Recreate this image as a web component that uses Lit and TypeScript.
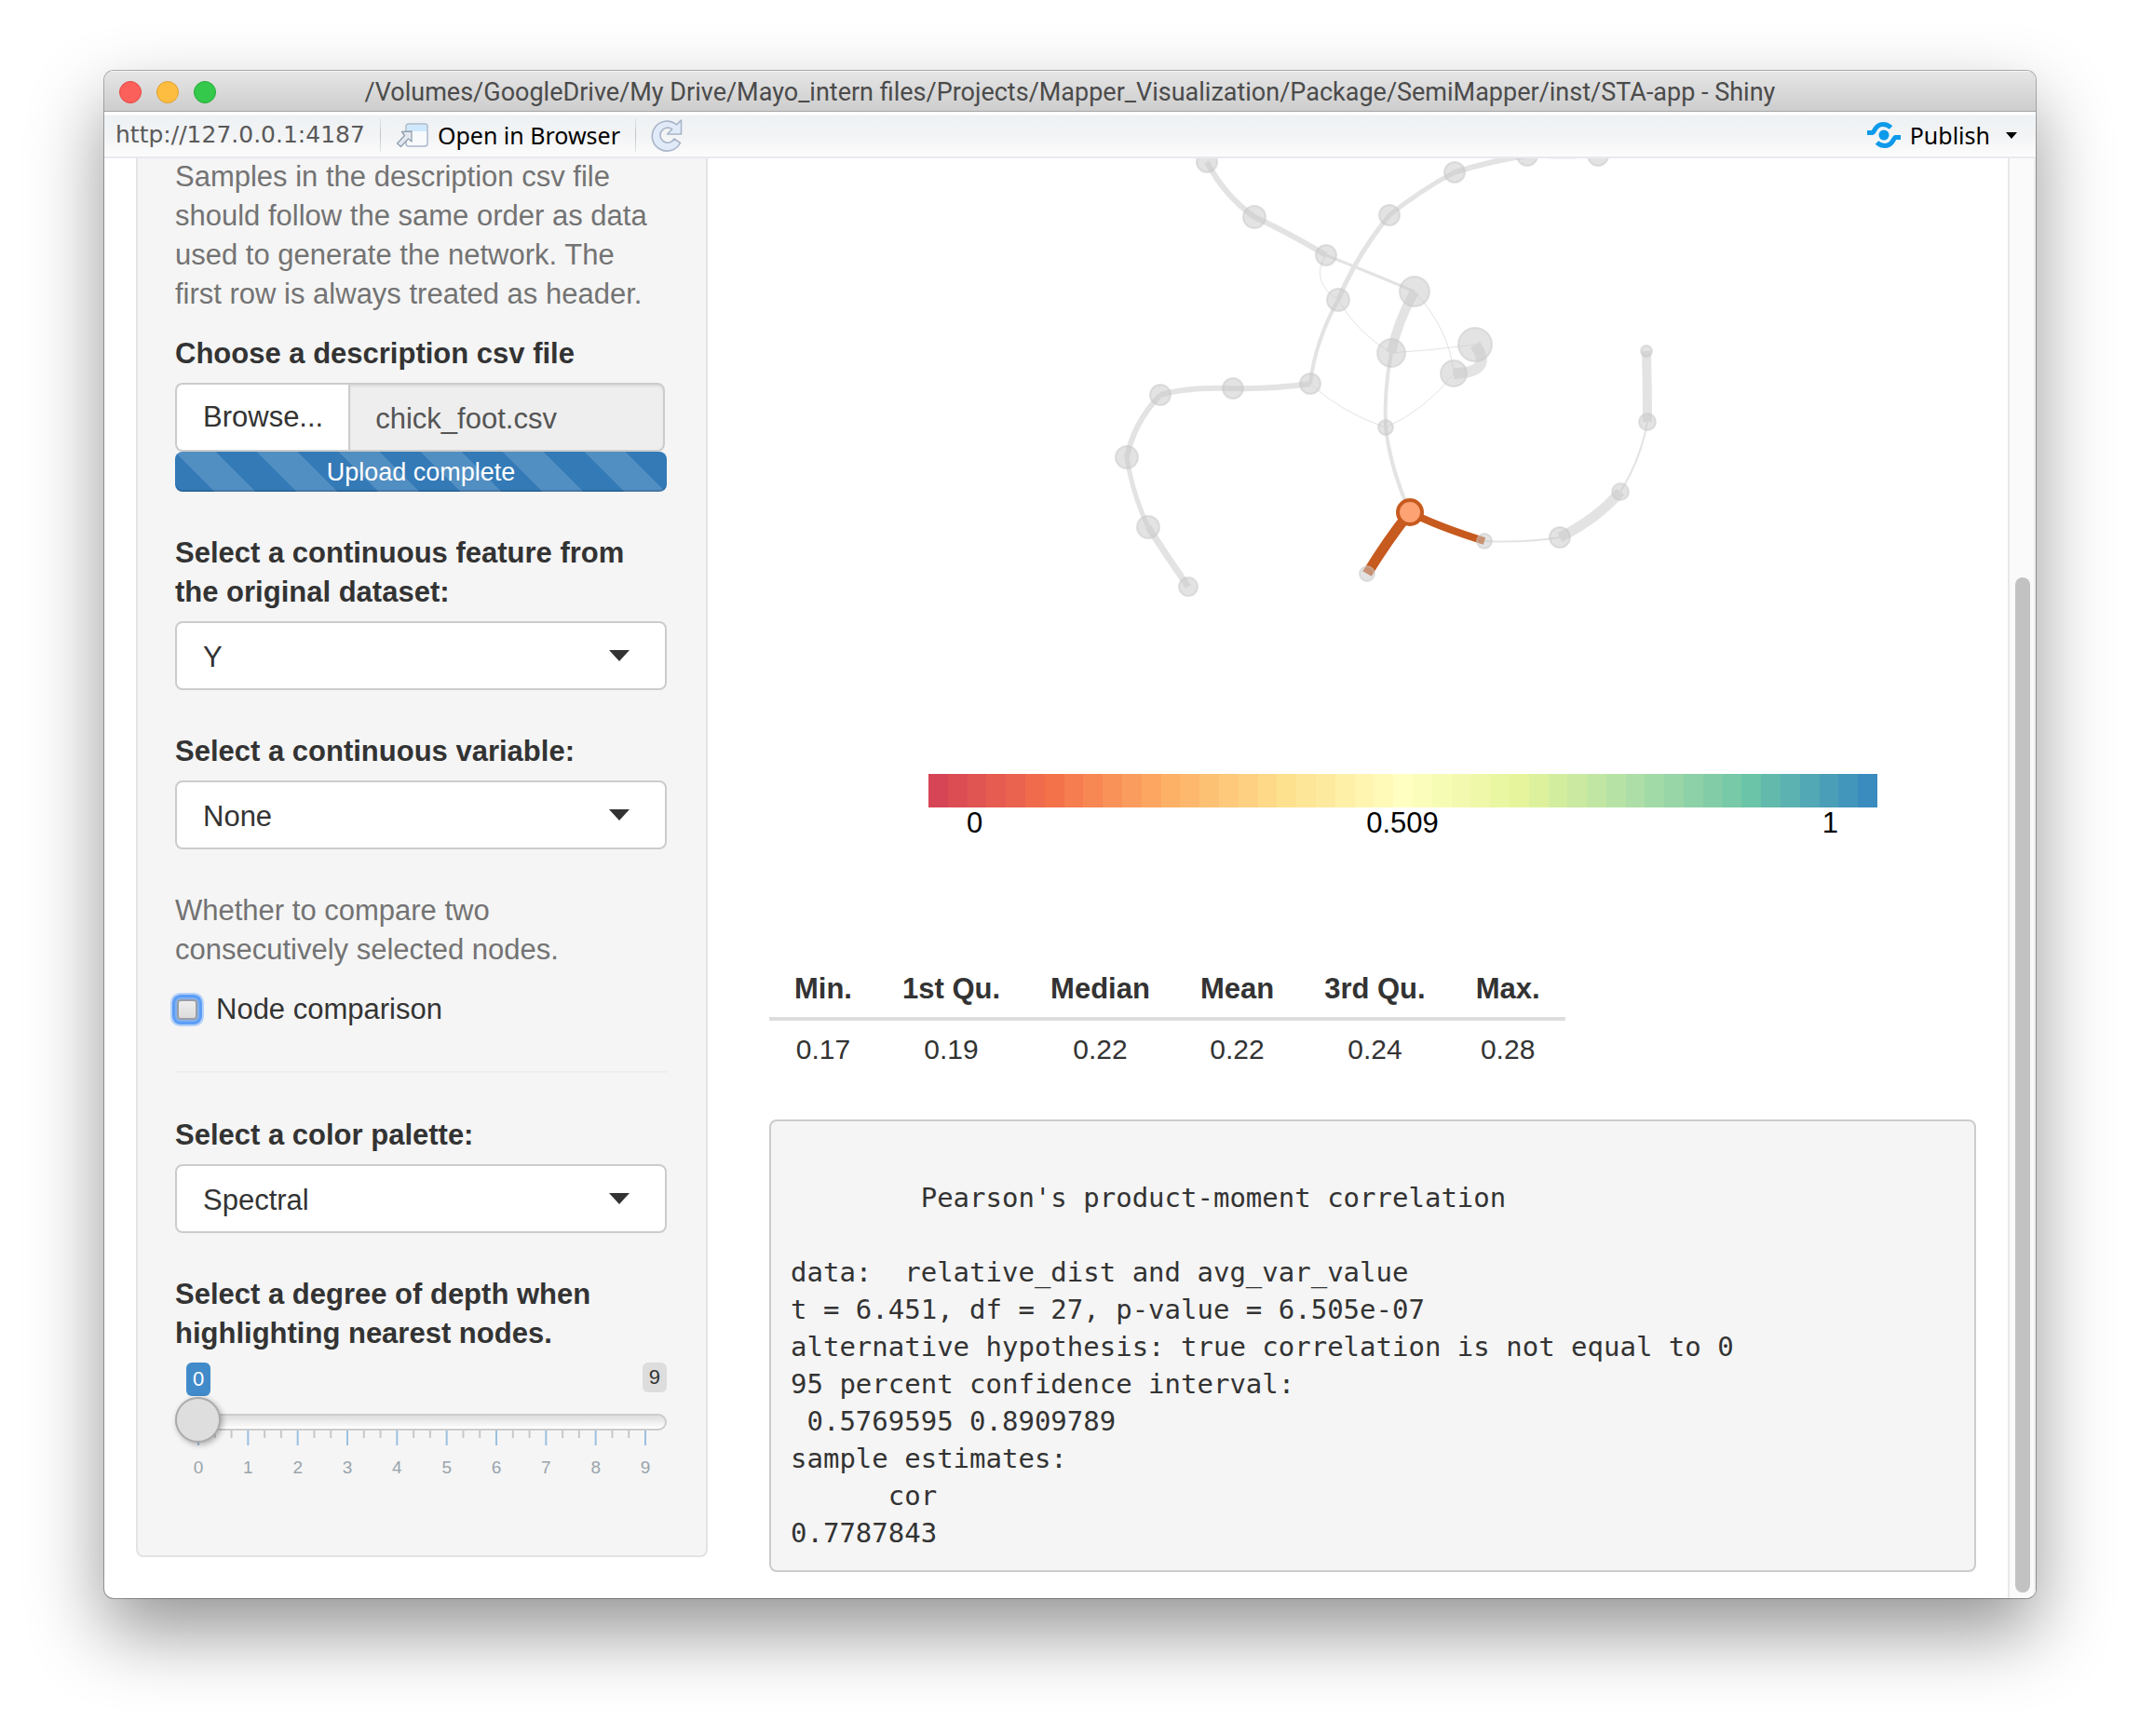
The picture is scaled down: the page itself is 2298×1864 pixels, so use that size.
import { LitElement, html, svg, css } from "lit";
import { customElement, property } from "lit/decorators.js";

type Node = [x: number, y: number, r: number];
type Edge = [from: string, to: string, cx: number, cy: number, width: number];

const NODES: Record<string, Node> = {
  a: [1296, 174, 11], b: [1347, 233, 12], c: [1424, 274, 11], d: [1492, 231, 11],
  e: [1562, 185, 11], f: [1640, 167, 11], g: [1716, 167, 11], h: [1437, 322, 12],
  i: [1519, 313, 16], j: [1494, 379, 15], k: [1584, 370, 18], l: [1561, 401, 14],
  m: [1407, 412, 11], n: [1324, 417, 11], o: [1246, 424, 11], p: [1210, 491, 12],
  q: [1233, 566, 12], r: [1276, 630, 10], s: [1488, 459, 8], u: [1468, 616, 8],
  v: [1594, 581, 8], w: [1675, 577, 11], x: [1740, 528, 9], y: [1769, 453, 9],
  z: [1768, 377, 6],
};
const SELECTED: Node = [1514, 550, 13];

const EDGES: Edge[] = [
  ["a", "b", 1315, 210, 6], ["b", "c", 1380, 248, 6], ["c", "i", 1474, 294, 3],
  ["c", "h", 1406, 302, 1], ["d", "e", 1527, 203, 5], ["e", "f", 1604, 172, 6],
  ["f", "g", 1680, 171, 3], ["d", "h", 1456, 275, 5], ["h", "m", 1412, 367, 4],
  ["h", "j", 1457, 357, 1], ["i", "j", 1500, 347, 10], ["i", "l", 1557, 355, 1],
  ["j", "k", 1539, 376, 1], ["k", "l", 1605, 400, 12], ["j", "s", 1486, 420, 4],
  ["m", "n", 1364, 418, 6], ["n", "o", 1278, 415, 6], ["o", "p", 1218, 453, 6],
  ["p", "q", 1216, 530, 5], ["q", "r", 1253, 597, 7], ["m", "s", 1441, 443, 1],
  ["l", "s", 1531, 440, 1], ["v", "w", 1637, 583, 2], ["w", "x", 1715, 557, 11],
  ["x", "y", 1762, 493, 2], ["y", "z", 1769, 415, 10],
];

const SPECTRAL = [
  [213, 62, 79], [244, 109, 67], [253, 174, 97], [254, 224, 139], [255, 255, 191],
  [230, 245, 152], [171, 221, 164], [102, 194, 165], [50, 136, 189],
];
const SWATCHES = Array.from({ length: 49 }, (_, i) => {
  const k = Math.min(Math.floor(i / 6), 7);
  const t = i / 6 - k;
  const mix = SPECTRAL[k].map((v, c) => Math.round(v + (SPECTRAL[k + 1][c] - v) * t));
  return `rgb(${mix.join(",")})`;
});

const SUMMARY = [
  ["Min.", "0.17"], ["1st Qu.", "0.19"], ["Median", "0.22"],
  ["Mean", "0.22"], ["3rd Qu.", "0.24"], ["Max.", "0.28"],
];

const REPORT = [
  " ",
  "        Pearson's product-moment correlation",
  "",
  "data:  relative_dist and avg_var_value",
  "t = 6.451, df = 27, p-value = 6.505e-07",
  "alternative hypothesis: true correlation is not equal to 0",
  "95 percent confidence interval:",
  " 0.5769595 0.8909789",
  "sample estimates:",
  "      cor",
  "0.7787843",
].join("\n");

@customElement("select-field")
class SelectField extends LitElement {
  @property() label = "";
  @property() value = "";

  static styles = css`
    :host { display: block; }
    label { display: block; margin-bottom: 10px; font-weight: bold; }
    .box { display: grid; align-items: center; }
    .box > * { grid-area: 1 / 1; }
    select {
      appearance: none; box-sizing: border-box; width: 100%; height: 74px;
      padding: 4px 80px 0 28px; border: 2px solid #ccc; border-radius: 8px;
      background: #fff; color: #333; font: inherit;
    }
    svg { justify-self: end; margin-right: 40px; pointer-events: none; }
  `;

  render() {
    return html`
      <label for="field">${this.label}</label>
      <div class="box">
        <select id="field"><option>${this.value}</option></select>
        <svg width="22" height="12" viewBox="0 0 22 12" aria-hidden="true"><path d="M0 0H22L11 12Z" fill="#333" /></svg>
      </div>
    `;
  }
}

@customElement("depth-slider")
class DepthSlider extends LitElement {
  static styles = css`
    :host { display: block; }
    label { display: block; margin-bottom: 10px; font-weight: bold; }
    .badges { display: flex; justify-content: space-between; align-items: start; padding-left: 12px; margin-bottom: 3px; }
    .badge { padding: 0 7px; border-radius: 6px; background: #ddd; font-size: 22px; line-height: 32px; }
    .badge.current { background: #428bca; color: #fff; line-height: 36px; }
    input {
      appearance: none; display: block; position: relative; box-sizing: border-box;
      width: 100%; height: 50px; margin: 0; background: none;
    }
    input::-webkit-slider-runnable-track {
      box-sizing: border-box; height: 18px; border: 2px solid #ccc; border-radius: 9px;
      background: linear-gradient(#dedede, #fff);
    }
    input::-webkit-slider-thumb {
      appearance: none; box-sizing: border-box; width: 49px; height: 49px; margin: -20px 0 0 -2px;
      border: 2px solid #ababab; border-radius: 50%; background: #dedede;
      box-shadow: 2px 2px 6px rgba(0, 0, 0, 0.3);
    }
    .scale { margin: -16px 23px 0 25px; }
    .scale svg { display: block; width: 100%; height: 52px; overflow: visible; }
    .minor { stroke: #c8c8c8; stroke-width: 2; }
    .major { stroke: #9bc0e0; stroke-width: 2; }
    text { fill: #99a4ac; font-size: 19px; text-anchor: middle; }
  `;

  render() {
    const ticks = Array.from({ length: 28 }, (_, i) => {
      const x = `${(i / 27) * 100}%`;
      return i % 3
        ? svg`<line class="minor" x1=${x} x2=${x} y1="0" y2="8" />`
        : svg`<line class="major" x1=${x} x2=${x} y1="0" y2="16" /><text x=${x} y="46">${i / 3}</text>`;
    });
    return html`
      <label for="depth">Select a degree of depth when highlighting nearest nodes.</label>
      <div class="badges"><span class="badge current">0</span><span class="badge">9</span></div>
      <input id="depth" type="range" min="0" max="9" value="0" />
      <div class="scale"><svg aria-hidden="true">${ticks}</svg></div>
    `;
  }
}

@customElement("network-graph")
class NetworkGraph extends LitElement {
  static styles = css`
    :host { display: block; }
    svg { display: block; width: 100%; }
    .edge { fill: none; stroke: #e3e3e3; }
    .node { fill: rgba(200, 200, 200, 0.5); stroke: rgba(200, 200, 200, 0.5); stroke-width: 2; }
    .edge.active { stroke: #c75a1e; }
    .node.active { fill: #fca273; stroke: #c75a1e; stroke-width: 4; }
  `;

  render() {
    const [sx, sy, sr] = SELECTED;
    return html`
      <svg viewBox="826 170 1296 661" role="img" aria-label="Network">
        <path class="edge" stroke-width="4" d="M1488 459Q1493 503 ${sx} ${sy}" />
        ${EDGES.map(([from, to, cx, cy, w]) => {
          const [x1, y1] = NODES[from];
          const [x2, y2] = NODES[to];
          return svg`<path class="edge" stroke-width=${w} d="M${x1} ${y1}Q${cx} ${cy} ${x2} ${y2}" />`;
        })}
        <path class="edge active" stroke-width="11" d="M${sx} ${sy}Q1490 580 1468 616" />
        <path class="edge active" stroke-width="8" d="M${sx} ${sy}Q1543 565 1594 581" />
        ${Object.values(NODES).map(([x, y, r]) => svg`<circle class="node" cx=${x} cy=${y} r=${r} />`)}
        <circle class="node active" cx=${sx} cy=${sy} r=${sr} />
      </svg>
    `;
  }
}

@customElement("app-root")
class AppRoot extends LitElement {
  static styles = css`
    :host {
      display: block; padding: 76px 112px 148px; background: #fff; color: #333;
      font: 31px/42px "Liberation Sans", Arial, sans-serif;
    }
    .window {
      overflow: hidden; border-radius: 10px; background: #fff;
      box-shadow: 0 0 0 1px rgba(0, 0, 0, 0.3), 0 36px 80px rgba(0, 0, 0, 0.42);
    }

    .titlebar {
      display: grid; grid-template-columns: 1fr auto 1fr; align-items: center;
      box-sizing: border-box; height: 44px; padding: 2px 16px 0; border-bottom: 1px solid #a5a5a5;
      background: linear-gradient(#e6e6e6, #cdcdcd); box-shadow: inset 0 1px #f4f4f4;
    }
    .lights { display: flex; gap: 16px; }
    .light { width: 24px; height: 24px; box-sizing: border-box; padding: 0; border-radius: 50%; border: 1px solid; }
    .close { background: #fc605b; border-color: #e34843; }
    .minimize { background: #fdbd40; border-color: #dfa033; }
    .zoom { background: #34c94a; border-color: #24aa38; }
    .title { margin: 0; color: #4b4b4b; font: 27px/32px Roboto, sans-serif; }

    .toolbar {
      display: flex; align-items: center; gap: 16px; box-sizing: border-box; height: 50px;
      padding: 2px 20px 0 12px; border-bottom: 2px solid #e9e9f0;
      background: linear-gradient(#fff 3px, #eef2f4 4px, #f2f3f5 24px, #fcfcfc);
      color: #000; font: 25px/32px "Noto Sans", sans-serif;
    }
    .url { color: #5a5a5a; font-family: "DejaVu Sans", sans-serif; }
    .sep { width: 1px; height: 36px; background: linear-gradient(#e4e6e8, #bfc2c4, #e4e6e8); }
    .tool {
      display: flex; align-items: center; gap: 9px; padding: 0; border: 0;
      background: none; color: inherit; font: inherit; text-decoration: none;
    }
    .publish { margin-left: auto; }
    .publish .caret { margin-left: 8px; }

    .viewport { display: flex; overflow: hidden; }
    .page {
      flex: 1; display: grid; grid-template-columns: minmax(0, 614fr) minmax(0, 1296fr); gap: 66px;
      align-items: start; padding: 0 34px 28px;
    }
    .sidebar {
      padding: 0 42px 82px 40px; border: 2px solid #e3e3e3; border-top: 0;
      border-radius: 0 0 8px 8px; background: #f5f5f5;
    }
    .help { margin: 0 0 22px; color: #737373; }
    .help.first { margin-top: -1px; }
    .field { display: block; margin-bottom: 45px; }
    .label { display: block; margin-bottom: 10px; font-weight: bold; }
    .upload { display: flex; height: 74px; margin-right: 2px; }
    .browse {
      padding: 0 27px 0 28px; border: 2px solid #ccc; border-right: 0; border-radius: 8px 0 0 8px;
      background: #fff; color: #333; font: inherit;
    }
    .filename {
      flex: 1; min-width: 0; box-sizing: border-box; padding: 4px 27px 0; border: 2px solid #ccc;
      border-radius: 0 8px 8px 0; background: #eee; color: #555; font: inherit;
      box-shadow: inset 0 2px 2px rgba(0, 0, 0, 0.075);
    }
    .progress {
      height: 43px; border-radius: 8px; background: #337ab7
        linear-gradient(45deg, rgba(255, 255, 255, 0.15) 25%, transparent 25%, transparent 50%,
        rgba(255, 255, 255, 0.15) 50%, rgba(255, 255, 255, 0.15) 75%, transparent 75%) 0 0 / 88px 88px;
      box-shadow: inset 0 -2px rgba(0, 0, 0, 0.15);
      color: #fff; font-size: 27px; line-height: 44px; text-align: center;
    }
    .check { display: flex; align-items: center; gap: 20px; padding-left: 2px; }
    .check input {
      appearance: none; width: 22px; height: 22px; margin: 0; box-sizing: border-box;
      border: 2px solid #9b9ea6; border-radius: 4px; background: linear-gradient(#eee, #dcdcdc);
      box-shadow: 0 0 0 2px #7fb0f0, 0 0 0 5px #5c9ef5, 0 0 0 7px #b5d1f8;
    }
    hr { height: 2px; margin: 45px 0 46px; border: 0; background: #eee; }

    .legend { margin: 0 106px 131px 171px; color: #000; line-height: 34px; }
    .swatches { display: flex; height: 36px; opacity: 0.96; }
    .swatches i { flex: 1; }
    .marks { display: grid; grid-template-columns: 1fr auto 1fr; padding: 0 42px 0 41px; }
    .marks :last-child { text-align: right; }

    table { margin-bottom: 44px; border-spacing: 0; text-align: center; }
    th { padding: 9px 27px; border-bottom: 4px solid #ddd; }
    td { padding: 10px 0; font-size: 30px; }
    pre {
      margin: 0; padding: 22px 21px 20px; border: 2px solid #ccc; border-radius: 8px; background: #f5f5f5;
      font: 29px/40px "DejaVu Sans Mono", monospace;
    }

    .scrollbar {
      display: flex; flex-direction: column; box-sizing: border-box; width: 30px; padding: 0 4px 6px 6px;
      border-left: 2px solid #e8e8e8; border-right: 2px solid #eee; background: #fafafa;
    }
    .before { flex: 45; }
    .thumb { flex: 109; border-radius: 8px; background: #c2c2c2; }
  `;

  render() {
    return html`
      <div class="window">
        <header class="titlebar">
          <div class="lights">
            <button class="light close" aria-label="Close"></button>
            <button class="light minimize" aria-label="Minimize"></button>
            <button class="light zoom" aria-label="Zoom"></button>
          </div>
          <h1 class="title">/Volumes/GoogleDrive/My Drive/Mayo_intern files/Projects/Mapper_Visualization/Package/SemiMapper/inst/STA-app - Shiny</h1>
        </header>

        <nav class="toolbar">
          <span class="url">http://127.0.0.1:4187</span>
          <span class="sep"></span>
          <a class="tool" href="http://127.0.0.1:4187">
            <svg width="36" height="28" viewBox="0 0 36 28" aria-hidden="true">
              <rect x="11" y="2" width="23" height="24" rx="3" fill="#f8fafc" stroke="#a9b9cc" stroke-width="1.5" />
              <path d="M12 10V5a2 2 0 0 1 2-2H31a2 2 0 0 1 2 2V10Z" fill="#cfe8fb" />
              <path d="M17 10V21L13.500 18L5.500 26.500L1.500 23L9.500 14.500L6.500 10.500Z" fill="#e4e8ee" stroke="#93a1b1" stroke-width="1.300" stroke-linejoin="round" />
            </svg>
            Open in Browser
          </a>
          <span class="sep"></span>
          <button class="tool" aria-label="Reload">
            <svg width="36" height="36" viewBox="0 0 36 36" aria-hidden="true">
              <path d="M32.500 2V17H17.500L22.800 11.800A8 8 0 1 0 25 22L31.500 26.500A16 16 0 1 1 27.500 6.800Z" fill="#e1eaf9" stroke="#a9b5c8" stroke-width="1.600" stroke-linejoin="round" />
            </svg>
          </button>
          <button class="tool publish">
            <svg width="38" height="30" viewBox="0 0 38 30" aria-hidden="true">
              <g fill="none" stroke="#0d9aea" stroke-width="5">
                <path d="M1 12.500H6.500C9 12.500 9 3.500 18 3.500C22 3.500 24.500 5 26.500 7" />
                <path d="M37 17.500H31.500C29 17.500 29 26.500 20 26.500C16 26.500 13.500 25 11.500 23" />
              </g>
              <circle cx="19" cy="15" r="5.500" fill="#0d9aea" />
            </svg>
            Publish
            <svg class="caret" width="12" height="7" viewBox="0 0 12 7" aria-hidden="true"><path d="M0 0H12L6 7Z" /></svg>
          </button>
        </nav>

        <div class="viewport">
          <div class="page">
            <form class="sidebar">
              <p class="help first">Samples in the description csv file should follow the same order as data used to generate the network. The first row is always treated as header.</p>
              <div class="field">
                <label class="label" for="file">Choose a description csv file</label>
                <div class="upload">
                  <button class="browse" type="button">Browse...</button>
                  <input class="filename" id="file" type="text" readonly value="chick_foot.csv" />
                </div>
                <div class="progress">Upload complete</div>
              </div>
              <select-field class="field" label="Select a continuous feature from the original dataset:" value="Y"></select-field>
              <select-field class="field" label="Select a continuous variable:" value="None"></select-field>
              <p class="help">Whether to compare two consecutively selected nodes.</p>
              <label class="check"><input type="checkbox" />Node comparison</label>
              <hr />
              <select-field class="field" label="Select a color palette:" value="Spectral"></select-field>
              <depth-slider></depth-slider>
            </form>

            <main>
              <network-graph></network-graph>
              <div class="legend">
                <div class="swatches">${SWATCHES.map((c) => html`<i style="background:${c}"></i>`)}</div>
                <div class="marks"><span>0</span><span>0.509</span><span>1</span></div>
              </div>
              <table>
                <thead><tr>${SUMMARY.map(([name]) => html`<th>${name}</th>`)}</tr></thead>
                <tbody><tr>${SUMMARY.map(([, value]) => html`<td>${value}</td>`)}</tr></tbody>
              </table>
              <pre>${REPORT}</pre>
            </main>
          </div>
          <div class="scrollbar"><div class="before"></div><div class="thumb"></div></div>
        </div>
      </div>
    `;
  }
}
